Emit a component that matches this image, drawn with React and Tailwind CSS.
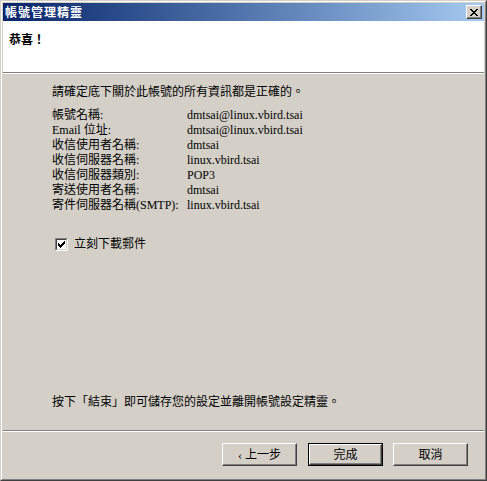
import React from "react";

const FONT = { fontFamily: '"Liberation Serif", "Noto Sans CJK TC", serif' };

function Btn({ children, def }) {
  const inner = (
    <div className="w-full h-full flex items-center justify-center border-t border-l border-t-white border-l-white border-b border-r border-b-[#404040] border-r-[#404040] shadow-[inset_-1px_-1px_0_#808080] text-[12px] leading-none text-black">
      {children}
    </div>
  );
  if (def) {
    return <div className="w-[75px] h-[23px] border border-black">{inner}</div>;
  }
  return <div className="w-[75px] h-[23px]">{inner}</div>;
}

const rows = [
  ["帳號名稱:", "dmtsai@linux.vbird.tsai"],
  ["Email 位址:", "dmtsai@linux.vbird.tsai"],
  ["收信使用者名稱:", "dmtsai"],
  ["收信伺服器名稱:", "linux.vbird.tsai"],
  ["收信伺服器類別:", "POP3"],
  ["寄送使用者名稱:", "dmtsai"],
  ["寄件伺服器名稱(SMTP):", "linux.vbird.tsai"],
];

export default function App() {
  return (
    <div
      className="w-[487px] h-[481px] bg-[#d4d0c8] border-t border-l border-t-[#d4d0c8] border-l-[#d4d0c8] border-b border-r border-b-[#404040] border-r-[#404040]"
      style={FONT}
    >
      <div className="w-full h-full border-t border-l border-t-white border-l-white border-b border-r border-b-[#808080] border-r-[#808080] p-px flex flex-col">
        {/* Title bar */}
        <div className="h-[18px] shrink-0 flex items-center pl-[2px] pr-[2px] bg-gradient-to-r from-[#0a246a] to-[#a6caf0]">
          <span
            className="text-white font-bold text-[12px] leading-none tracking-[1px]"
            style={{ fontFamily: '"Noto Sans CJK TC", sans-serif' }}
          >
            帳號管理精靈
          </span>
          <div className="ml-auto w-[16px] h-[14px] bg-[#d4d0c8] border-t border-l border-t-white border-l-white border-b border-r border-b-[#404040] border-r-[#404040] shadow-[inset_-1px_-1px_0_#808080] flex items-center justify-center">
            <svg width="8" height="7" viewBox="0 0 8 7" shapeRendering="crispEdges">
              <path
                fill="#000"
                d="M0 0h2v1H0zM6 0h2v1H6zM1 1h2v1H1zM5 1h2v1H5zM2 2h4v1H2zM3 3h2v1H3zM2 4h4v1H2zM1 5h2v1H1zM5 5h2v1H5zM0 6h2v1H0zM6 6h2v1H6z"
              />
            </svg>
          </div>
        </div>

        {/* Header */}
        <div className="h-[51px] shrink-0 bg-white pl-[6px] pt-[10px]">
          <div
            className="text-[12px] leading-[15px] font-bold text-black"
            style={{ fontFamily: '"Noto Sans CJK TC", sans-serif' }}
          >
            恭喜！
          </div>
        </div>
        <div className="h-px bg-[#808080] shrink-0" />
        <div className="h-px bg-white shrink-0" />

        {/* Body */}
        <div className="flex-1 flex flex-col pl-[49px] pt-[11px] pb-[20px] text-[12px] leading-[15px] text-black">
          <div>請確定底下關於此帳號的所有資訊都是正確的。</div>
          <div className="mt-[8px] flex flex-col">
            {rows.map(([k, v]) => (
              <div key={k} className="flex h-[15px]">
                <div className="w-[135px] shrink-0">{k}</div>
                <div>{v}</div>
              </div>
            ))}
          </div>
          <div className="mt-[24px] flex items-center ml-[3px]">
            <div className="w-[13px] h-[13px] border-t border-l border-t-[#808080] border-l-[#808080] border-b border-r border-b-white border-r-white">
              <div className="w-full h-full bg-white border-t border-l border-t-[#404040] border-l-[#404040] border-b border-r border-b-[#d4d0c8] border-r-[#d4d0c8] flex items-center justify-center">
                <svg width="7" height="7" viewBox="0 0 7 7" shapeRendering="crispEdges">
                  <path
                    fill="#000"
                    d="M6 0h1v3H6zM5 1h1v3H5zM4 2h1v3H4zM3 3h1v3H3zM2 4h1v3H2zM1 3h1v3H1zM0 2h1v3H0z"
                  />
                </svg>
              </div>
            </div>
            <span className="ml-[6px]">立刻下載郵件</span>
          </div>
          <div className="flex-1" />
          <div>按下「結束」即可儲存您的設定並離開帳號設定精靈。</div>
        </div>

        <div className="h-px bg-[#808080] shrink-0" />
        <div className="h-px bg-white shrink-0" />

        {/* Buttons */}
        <div className="h-[46px] shrink-0 flex justify-end items-start pt-[11px] pr-[16px]">
          <Btn>‹ 上一步</Btn>
          <div className="w-[11px]" />
          <Btn def>完成</Btn>
          <div className="w-[10px]" />
          <Btn>取消</Btn>
        </div>
      </div>
    </div>
  );
}
